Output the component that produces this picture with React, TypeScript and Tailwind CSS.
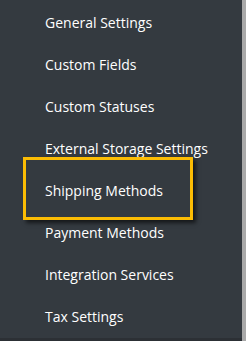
const items = [
  'General Settings',
  'Custom Fields',
  'Custom Statuses',
  'External Storage Settings',
  'Shipping Methods',
  'Payment Methods',
  'Integration Services',
  'Tax Settings',
];

export default function App() {
  return (
    <div className="flex h-[341px] w-[246px] overflow-hidden bg-[#343a40]">
      <div className="relative flex w-[242px] flex-col">
        <ul className="flex-1 pt-[2px] font-['Open_Sans',sans-serif] text-[14px] font-medium text-white">
          {items.map((item) => (
            <li key={item} className="pl-[45px] leading-[42px]">
              {item}
            </li>
          ))}
        </ul>
        <div className="h-[3px] bg-[#2c3035]" />
        {/* highlight annotation */}
        <div className="absolute left-[23px] top-[157px] h-[63px] w-[170px] border-[3px] border-[#fbbc04] shadow-[3px_3px_4px_rgba(0,0,0,0.6)]" />
      </div>
      <div className="w-[4px] bg-[#a9a9a9]" />
    </div>
  );
}
